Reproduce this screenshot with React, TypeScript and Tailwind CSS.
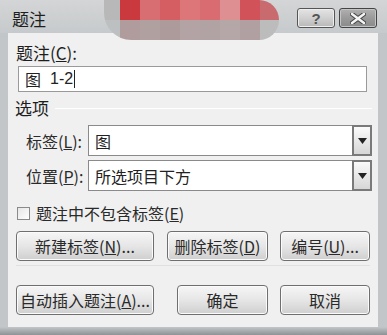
import React from "react";

const font = { fontFamily: '"Noto Sans CJK SC", "Noto Sans", sans-serif' };

function Btn({ children, className = "" }: { children: React.ReactNode; className?: string }) {
  return (
    <div
      className={`h-[30px] rounded-[4px] border border-[#6f6f6f] bg-gradient-to-b from-[#f6f6f6] via-[#e6e6e6] to-[#cfcfcf] flex items-center justify-center text-[16px] text-[#2a2a2a] shadow-[inset_0_0_0_1px_#fbfbfb] ${className}`}
    >
      {children}
    </div>
  );
}

function Select({ value }: { value: string }) {
  return (
    <div className="flex h-[31px] w-[284px] border border-[#8a8a8a] bg-white">
      <div className="flex-1 flex items-center pl-[6px] text-[16px] text-[#222]">{value}</div>
      <div className="w-[20px] border-2 border-[#7a7a7a] bg-gradient-to-b from-[#fbfbfb] to-[#d6d6d6] flex items-center justify-center -m-px">
        <svg width="9" height="6" viewBox="0 0 9 6">
          <path d="M0 0 H9 L4.5 6 Z" fill="#222" />
        </svg>
      </div>
    </div>
  );
}

export default function App() {
  return (
    <div style={font} className="relative w-[387px] h-[335px] bg-[#c3c6c8] overflow-hidden select-none">
      {/* title bar */}
      <div className="relative h-[33px] bg-gradient-to-b from-[#d3d5d6] to-[#c7cacc] flex items-center">
        <span className="ml-[12px] mt-[4px] text-[17px] text-[#1e1e1e]">题注</span>
        {/* mosaic */}
        <div className="absolute left-[104px] top-0 w-[175px] h-[40px] rounded-r-[22px] rounded-bl-[30px] overflow-hidden flex flex-col">
          <div className="flex h-[20px]">
            <div className="w-[16px] bg-[#b8b8b8]" />
            <div className="w-[20px] bg-[#c9393e]" />
            <div className="w-[20px] bg-[#d86e71]" />
            <div className="w-[20px] bg-[#d45e62]" />
            <div className="w-[20px] bg-[#dc7679]" />
            <div className="w-[20px] bg-[#d86c70]" />
            <div className="w-[20px] bg-[#dd8f91]" />
            <div className="w-[20px] bg-[#d15258]" />
            <div className="flex-1 bg-[#c96a6e]" />
          </div>
          <div className="flex flex-1">
            <div className="w-[16px] bg-[#bcc0c0]" />
            <div className="w-[20px] bg-[#b09c9c]" />
            <div className="w-[20px] bg-[#b0a0a0]" />
            <div className="w-[20px] bg-[#ad9b9c]" />
            <div className="w-[20px] bg-[#b3a3a4]" />
            <div className="w-[20px] bg-[#b1a2a3]" />
            <div className="w-[20px] bg-[#b5a6a7]" />
            <div className="w-[20px] bg-[#b0a0a1]" />
            <div className="flex-1 bg-[#bcbcbc]" />
          </div>
        </div>
        {/* title buttons */}
        <div className="absolute left-[297px] top-[8px] w-[38px] h-[20px] rounded-[3px] border border-[#555] bg-gradient-to-b from-[#e4e4e4] via-[#d0d0d0] to-[#b8b8b8] flex items-center justify-center shadow-[inset_0_0_0_1px_#eee]">
          <span className="text-[15px] font-bold text-[#555] leading-none" style={{ fontFamily: '"Liberation Sans", sans-serif' }}>?</span>
        </div>
        <div className="absolute left-[339px] top-[8px] w-[38px] h-[20px] rounded-[3px] border border-[#444] bg-gradient-to-b from-[#b0b0b0] via-[#9a9a9a] to-[#8a8a8a] flex items-center justify-center shadow-[inset_0_0_0_1px_#c4c4c4]">
          <svg width="16" height="11" viewBox="0 0 16 11">
            <path d="M2 1 L14 10 M14 1 L2 10" stroke="#444" strokeWidth="4.5" strokeLinecap="round" />
            <path d="M2 1 L14 10 M14 1 L2 10" stroke="#f4f4f4" strokeWidth="2.5" strokeLinecap="round" />
          </svg>
        </div>
      </div>

      {/* client area */}
      <div className="ml-[8px] w-[370px] h-[294px] bg-[#f0f0f0] flex flex-col">
        <div className="ml-[8px] mt-[9px] h-[22px] text-[17px] text-[#1e1e1e] leading-[22px]">
          题注(<span className="underline">C</span>):
        </div>
        <div className="ml-[10px] mt-[2px] w-[349px] h-[26px] border border-[#9a9a9a] bg-white flex items-center pl-[6px] text-[16px] text-[#222]">
          <span>图</span>
          <span className="ml-[9px]" style={{ fontFamily: '"Liberation Sans", sans-serif' }}>1-2</span>
          <span className="ml-[1px] w-px h-[18px] bg-[#222]" />
        </div>
        <div className="mt-[5px] ml-[7px] flex items-center h-[22px]">
          <span className="text-[17px] text-[#1e1e1e]">选项</span>
          <div className="ml-[6px] flex-1 mr-[6px] h-px bg-[#d8d8d8] border-b border-white" />
        </div>
        <div className="mt-[6px] flex items-center">
          <span className="ml-[18px] w-[62px] text-[16px] text-[#2a2a2a]">标签(<span className="underline">L</span>):</span>
          <Select value="图" />
        </div>
        <div className="mt-[4px] flex items-center">
          <span className="ml-[18px] w-[62px] text-[16px] text-[#2a2a2a]">位置(<span className="underline">P</span>):</span>
          <Select value="所选项目下方" />
        </div>
        <div className="mt-[10px] ml-[9px] h-[24px] flex items-center">
          <div className="w-[13px] h-[13px] border border-[#8a8a8a] bg-gradient-to-br from-[#e6e6e6] to-[#ffffff]" />
          <span className="ml-[6px] text-[16px] text-[#2a2a2a]">题注中不包含标签(<span className="underline">E</span>)</span>
        </div>
        <div className="mt-[6px] ml-[8px] flex">
          <Btn className="w-[138px]">新建标签(<span className="underline">N</span>)...</Btn>
          <Btn className="ml-[13px] w-[101px]">删除标签(<span className="underline">D</span>)</Btn>
          <Btn className="ml-[12px] w-[90px]">编号(<span className="underline">U</span>)...</Btn>
        </div>
        <div className="mt-[4px] mx-[8px] h-px bg-[#e0e0e0]" />
        <div className="mt-[19px] ml-[8px] flex">
          <Btn className="w-[138px]">自动插入题注(<span className="underline">A</span>)...</Btn>
          <Btn className="ml-[23px] w-[91px] border-[#4a4a4a] shadow-[inset_0_0_0_1px_#bbb]">确定</Btn>
          <Btn className="ml-[12px] w-[90px]">取消</Btn>
        </div>
      </div>
      <div className="h-[8px] bg-gradient-to-b from-[#c3c6c8] to-[#8f9294]" />
    </div>
  );
}
